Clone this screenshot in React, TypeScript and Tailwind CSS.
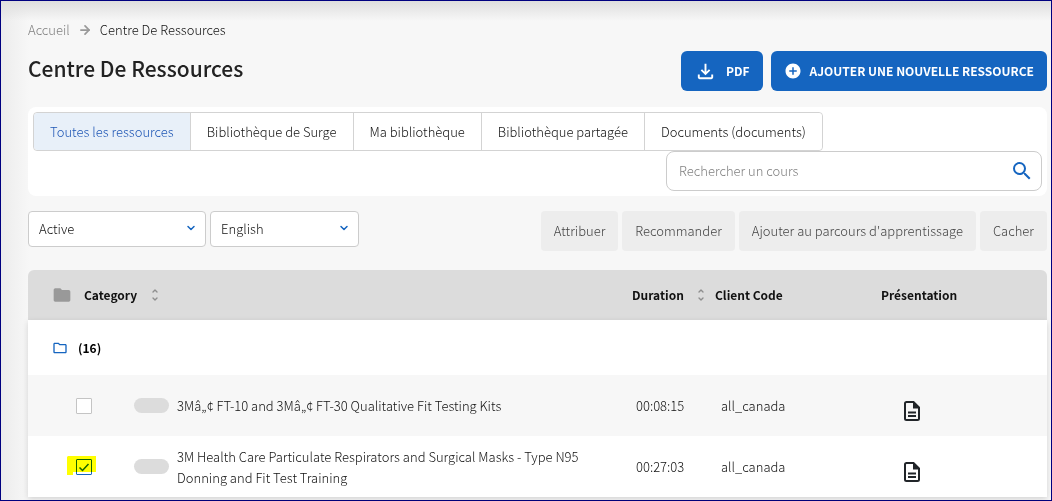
import React, { useState } from "react";
import {
  MdAddCircle,
  MdFolder,
  MdOutlineFileDownload,
  MdOutlineFolder,
  MdSearch,
} from "react-icons/md";
import { ArrowRight, ChevronDown, ChevronUp } from "lucide-react";

const TABS = [
  "Toutes les ressources",
  "Bibliothèque de Surge",
  "Ma bibliothèque",
  "Bibliothèque partagée",
  "Documents (documents)",
];

const ACTIONS = [
  "Attribuer",
  "Recommander",
  "Ajouter au parcours d'apprentissage",
  "Cacher",
];

const COURSES = [
  {
    id: "ft-10",
    name: "3Mâ„¢ FT-10 and 3Mâ„¢ FT-30 Qualitative Fit Testing Kits",
    duration: "00:08:15",
    client: "all_canada",
    highlighted: false,
  },
  {
    id: "n95",
    name: "3M Health Care Particulate Respirators and Surgical Masks - Type N95 Donning and Fit Test Training",
    duration: "00:27:03",
    client: "all_canada",
    highlighted: true,
  },
];

const SortIcon = () => (
  <span className="flex flex-col text-[#8e8e8e]">
    <ChevronUp size={8} strokeWidth={4} />
    <ChevronDown size={8} strokeWidth={4} />
  </span>
);

const DocumentIcon = () => (
  <svg width="18" height="20" viewBox="0 0 18 20" fill="none" aria-hidden="true">
    <path
      d="M3 1H10.5L16 6.5V17.5Q16 19 14.5 19H3.5Q2 19 2 17.5V2.5Q2 1 3.5 1Z"
      stroke="#212529"
      strokeWidth="2"
    />
    <path d="M10 1V7.500H16.500Z" fill="#212529" />
    <path d="M5 11.500H13M5 15H13" stroke="#212529" strokeWidth="2" />
  </svg>
);

interface FilterProps {
  label: string;
  options: string[];
  className: string;
}

const Filter: React.FC<FilterProps> = ({ label, options, className }) => (
  <div className={`relative ${className}`}>
    <select
      aria-label={label}
      className="h-9 w-full appearance-none rounded border border-[#ccc] bg-white pl-[10px] leading-6"
    >
      {options.map((option) => (
        <option key={option}>{option}</option>
      ))}
    </select>
    <ChevronDown
      size={12}
      strokeWidth={3}
      className="pointer-events-none absolute right-[9px] top-[11px] text-[#1565c0]"
    />
  </div>
);

export default function App() {
  const [activeTab, setActiveTab] = useState(TABS[0]);
  const [selected, setSelected] = useState<string[]>(["n95"]);

  const toggle = (id: string) => {
    setSelected((prev) =>
      prev.includes(id) ? prev.filter((item) => item !== id) : [...prev, id]
    );
  };

  return (
    <div className="relative min-h-screen border border-[#000080] bg-[#f7f7f7] pl-[27px] pr-1 font-['Noto_Sans_CJK_JP',sans-serif] text-[13px] font-light leading-5 text-[#111]">
      <div className="pointer-events-none absolute inset-y-0 left-0 w-7 bg-linear-to-r from-[#ececec] to-[#f7f7f7]" />
      <div className="pointer-events-none absolute inset-x-0 top-0 h-5 bg-linear-to-b from-[#dedede] to-transparent" />

      <div className="relative">
        <nav className="flex items-center gap-2 pt-[19px]">
          <a href="#" className="text-[#808080]">
            Accueil
          </a>
          <ArrowRight size={14} strokeWidth={3} className="text-[#999]" />
          <span>Centre De Ressources</span>
        </nav>

        <header className="mt-[11px] flex items-start justify-between">
          <h1 className="pt-[3px] text-[21px] font-medium leading-7 text-[#222]">
            Centre De Ressources
          </h1>
          <div className="flex gap-2 text-xs font-bold text-white">
            <button className="flex h-10 items-center gap-[9px] rounded-md bg-[#1565c0] px-[13px]">
              <MdOutlineFileDownload size={23} />
              PDF
            </button>
            <button className="flex h-10 items-center gap-2 rounded-md bg-[#1565c0] px-[13px]">
              <MdAddCircle size={18} />
              AJOUTER UNE NOUVELLE RESSOURCE
            </button>
          </div>
        </header>

        <section className="mt-4 flex flex-col rounded-lg bg-white p-[5px]">
          <div className="flex self-start rounded border border-[#d3d3d3]">
            {TABS.map((tab) => (
              <button
                key={tab}
                onClick={() => setActiveTab(tab)}
                className={`h-[37px] border-r border-[#d3d3d3] px-4 first:rounded-l last:rounded-r last:border-r-0 ${
                  tab === activeTab ? "bg-[#e8f0f9] text-[#1f57b5]" : "bg-white"
                }`}
              >
                {tab}
              </button>
            ))}
          </div>
          <form
            className="flex h-10 w-[376px] items-center self-end rounded-lg border border-[#ccc] bg-white pl-3 pr-[7px]"
            onSubmit={(e) => e.preventDefault()}
          >
            <input
              type="search"
              aria-label="Rechercher un cours"
              placeholder="Rechercher un cours"
              className="min-w-0 flex-1 outline-none placeholder:text-[#808080]"
            />
            <button aria-label="Rechercher" className="text-[#1565c0]">
              <MdSearch size={24} />
            </button>
          </form>
        </section>

        <div className="mt-[15px] flex items-start justify-between">
          <div className="flex gap-1">
            <Filter
              label="Statut"
              options={["Active", "Inactive"]}
              className="w-[178px]"
            />
            <Filter
              label="Langue"
              options={["English", "Français"]}
              className="w-[149px]"
            />
          </div>
          <div className="flex gap-1">
            {ACTIONS.map((action) => (
              <button
                key={action}
                className="h-10 rounded bg-[#ededed] px-[13px] text-[#444]"
              >
                {action}
              </button>
            ))}
          </div>
        </div>

        <table className="mt-[19px] w-full table-fixed text-left">
          <colgroup>
            <col className="w-[106px]" />
            <col />
            <col className="w-[83px]" />
            <col className="w-[146px]" />
            <col className="w-[186px]" />
          </colgroup>
          <thead className="text-xs text-[#111]">
            <tr className="h-[50px]">
              <th colSpan={2} className="rounded-tl-md bg-[#dcdcdc] pl-6 font-bold">
                <div className="flex items-center">
                  <MdFolder size={20} className="mr-3 text-[#999]" />
                  Category
                  <span className="ml-[14px]">
                    <SortIcon />
                  </span>
                </div>
              </th>
              <th className="bg-[#dcdcdc] font-bold">
                <div className="flex items-center justify-between pr-[10px]">
                  Duration
                  <SortIcon />
                </div>
              </th>
              <th className="bg-[#dcdcdc] font-bold">Client Code</th>
              <th className="rounded-tr-md bg-[#dcdcdc] pl-5 font-bold">
                Présentation
              </th>
            </tr>
          </thead>
          <tbody className="shadow-[0_2px_6px_rgba(0,0,0,0.15)]">
            <tr className="h-[55px] bg-white">
              <td colSpan={5} className="pl-6 text-black">
                <div className="flex items-center gap-[10px] text-xs font-bold">
                  <MdOutlineFolder size={16} className="text-[#1565c0]" />
                  (16)
                </div>
              </td>
            </tr>
            {COURSES.map((course) => (
              <tr key={course.id} className="h-[61px] odd:bg-white even:bg-[#f7f7f7]">
                <td className="pl-12">
                  <div className="relative flex size-4">
                    <input
                      id={course.id}
                      type="checkbox"
                      checked={selected.includes(course.id)}
                      onChange={() => toggle(course.id)}
                      className="size-4 appearance-none rounded-[1px] border border-[#c4c4c4] bg-white checked:border-[#1565c0]"
                    />
                    {selected.includes(course.id) && (
                      <svg
                        viewBox="0 0 16 16"
                        className="pointer-events-none absolute inset-0 size-4"
                        fill="none"
                        stroke="#1565c0"
                        strokeWidth="1.500"
                      >
                        <path d="M3.500 8.500L6.500 11.500L12.500 5" />
                      </svg>
                    )}
                    {course.highlighted && (
                      <svg
                        width="29"
                        height="19"
                        className="pointer-events-none absolute -left-[9px] -top-[3px] max-w-none mix-blend-multiply"
                      >
                        <path d="M1 0H29V16H6V19H0V1Z" fill="#ffff00" />
                      </svg>
                    )}
                  </div>
                </td>
                <td>
                  <div className="flex items-center gap-2">
                    <span className="h-[15px] w-[35px] shrink-0 rounded-full bg-[#dcdcdc]" />
                    <label htmlFor={course.id} className="max-w-[420px] leading-[21px]">
                      {course.name}
                    </label>
                  </div>
                </td>
                <td className="pl-1">{course.duration}</td>
                <td className="pl-[6px]">{course.client}</td>
                <td className="pl-[42px] pt-[10px]">
                  <DocumentIcon />
                </td>
              </tr>
            ))}
          </tbody>
        </table>
      </div>
    </div>
  );
}
